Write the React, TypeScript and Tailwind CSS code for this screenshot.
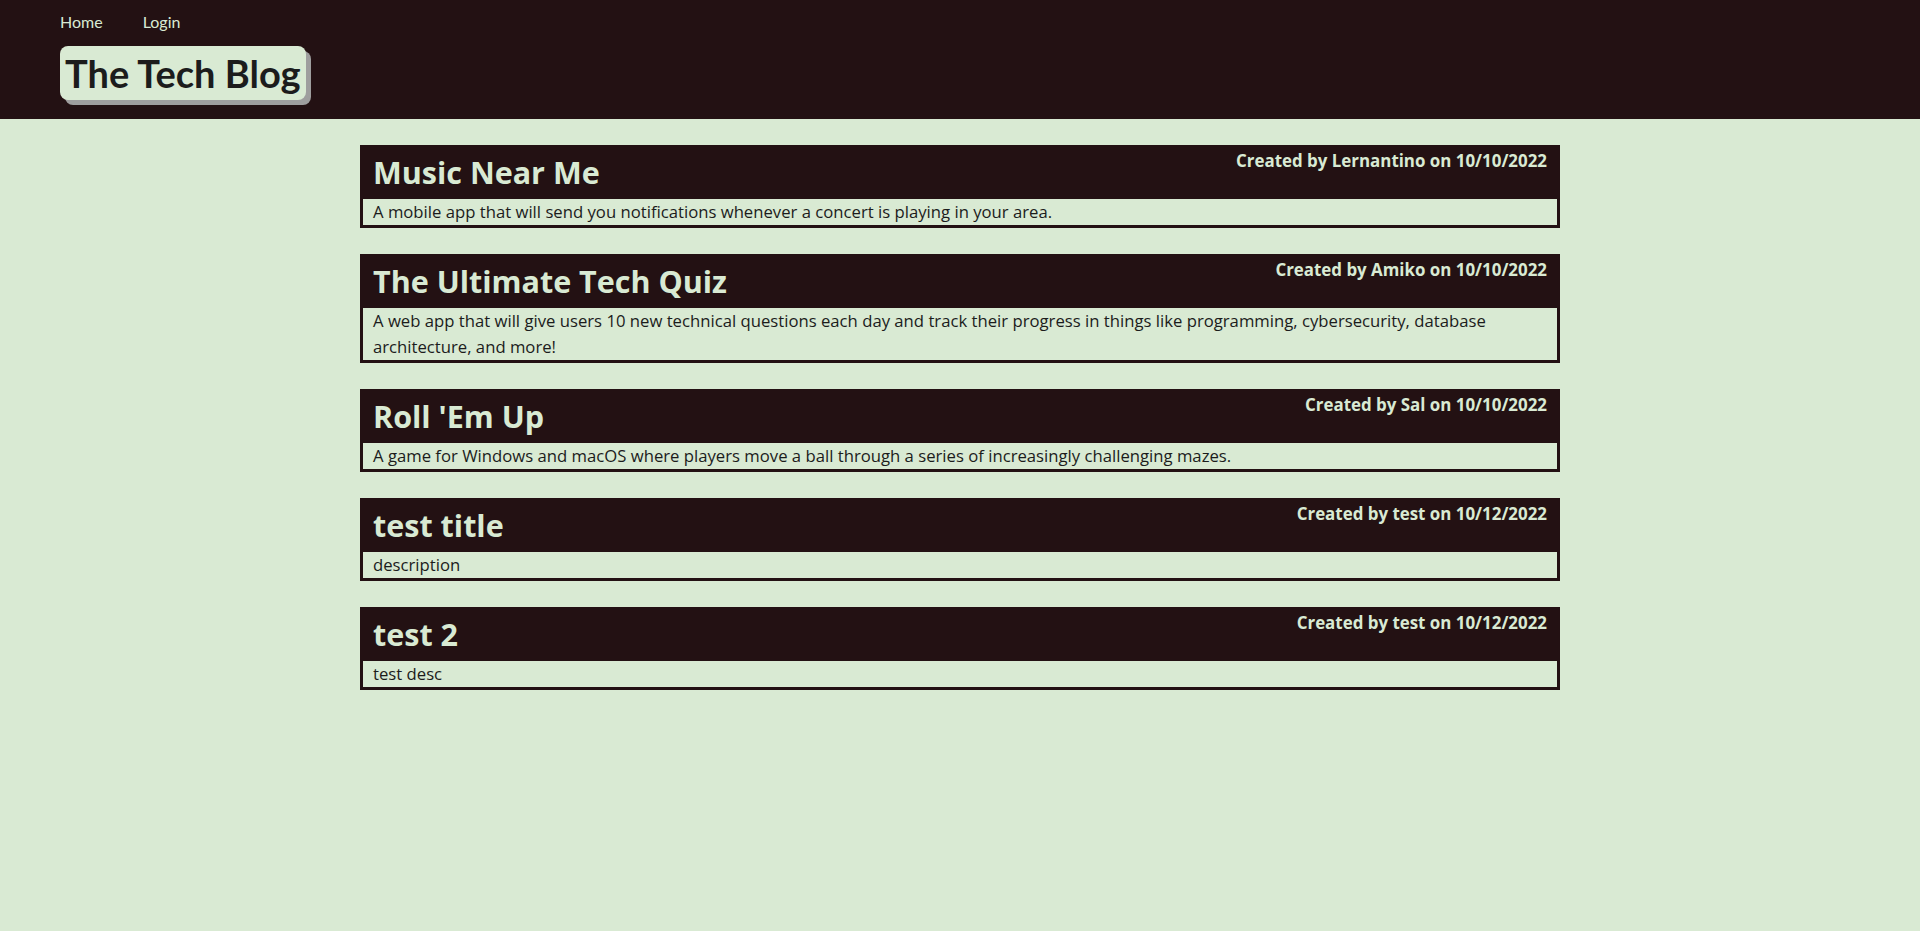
import React from "react";

const posts = [
  {
    title: "Music Near Me",
    author: "Lernantino",
    date: "10/10/2022",
    desc: "A mobile app that will send you notifications whenever a concert is playing in your area.",
  },
  {
    title: "The Ultimate Tech Quiz",
    author: "Amiko",
    date: "10/10/2022",
    desc: "A web app that will give users 10 new technical questions each day and track their progress in things like programming, cybersecurity, database architecture, and more!",
  },
  {
    title: "Roll 'Em Up",
    author: "Sal",
    date: "10/10/2022",
    desc: "A game for Windows and macOS where players move a ball through a series of increasingly challenging mazes.",
  },
  {
    title: "test title",
    author: "test",
    date: "10/12/2022",
    desc: "description",
  },
  {
    title: "test 2",
    author: "test",
    date: "10/12/2022",
    desc: "test desc",
  },
];

const lato = { fontFamily: "Lato, 'Noto Sans', sans-serif" };

export default function App() {
  return (
    <div
      className="min-h-[931px] bg-[#d9ead3] text-[#1c1c1c]"
      style={{ fontFamily: "'Open Sans', 'Noto Sans', sans-serif" }}
    >
      <header className="h-[119px] bg-[#231113] px-[60px] pt-[10px]">
        <nav
          className="flex h-[24px] gap-[40px] text-[16px] leading-[24px] text-[#d9ead3]"
          style={lato}
        >
          <a href="#">Home</a>
          <a href="#">Login</a>
        </nav>
        <div className="mt-[12px] flex">
          <h1
            className="h-[54px] rounded-[8px] bg-[#d9ead3] px-[5px] text-[38px] font-bold leading-[54px] text-[#1c1c1c] shadow-[5px_5px_0_#9e9e9e]"
            style={lato}
          >
            The Tech Blog
          </h1>
        </div>
      </header>
      <main className="flex flex-col items-center gap-[26px] pt-[26px]">
        {posts.map((p) => (
          <article key={p.title} className="w-[1200px] border-[3px] border-[#231113]">
            <div className="flex items-start justify-between bg-[#231113] px-[10px] pb-[2px] text-[#d9ead3]">
              <h2 className="text-[30.5px] font-bold leading-[49px]">{p.title}</h2>
              <p className="pt-[1px] text-[16.9px] font-bold leading-[24px]">
                Created by {p.author} on {p.date}
              </p>
            </div>
            <p className="bg-[#d9ead3] px-[10px] text-[16.7px] leading-[26px] text-[#1c1c1c]">
              {p.desc}
            </p>
          </article>
        ))}
      </main>
    </div>
  );
}
